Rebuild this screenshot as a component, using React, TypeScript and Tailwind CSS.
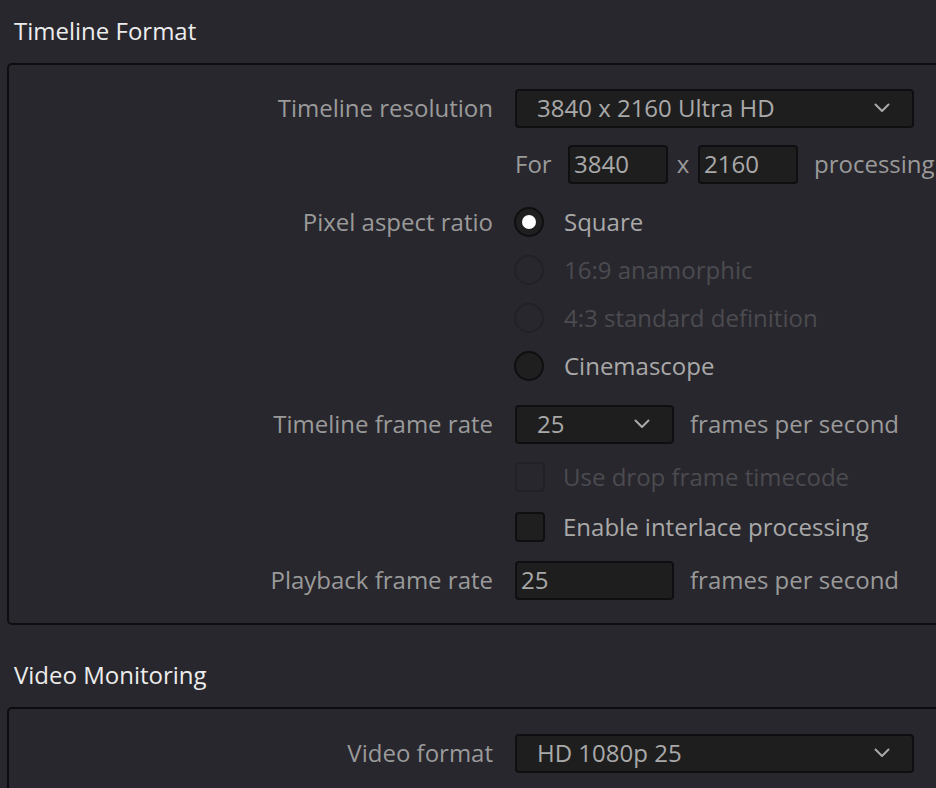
import React from 'react';

const font = { fontFamily: '"Open Sans", "Noto Sans", sans-serif' };

function Chevron() {
  return (
    <svg width="16" height="10" viewBox="0 0 16 10" fill="none">
      <path d="M1.5 1.5 L8 8 L14.5 1.5" stroke="#a9a9a9" strokeWidth="2" strokeLinecap="round" strokeLinejoin="round" />
    </svg>
  );
}

function Select({ value, width }: { value: string; width: string }) {
  return (
    <div className={`flex h-[39px] ${width} items-center justify-between rounded-[4px] border-2 border-[#0f0f11] bg-[#1e1e1f] pl-[20px] pr-[22px] text-[#a9a9a9]`}>
      <span>{value}</span>
      <Chevron />
    </div>
  );
}

function Field({ value, width }: { value: string; width: string }) {
  return (
    <div className={`flex h-[39px] ${width} items-center rounded-[4px] border-2 border-[#0f0f11] bg-[#1e1e1f] pl-[4px] text-[#a9a9a9]`}>
      {value}
    </div>
  );
}

function Radio({ label, checked, disabled }: { label: string; checked?: boolean; disabled?: boolean }) {
  return (
    <div className="flex h-[48px] items-center">
      <div
        className={`flex h-[30px] w-[30px] items-center justify-center rounded-full border-2 ${
          disabled ? 'border-[#222226] bg-transparent' : 'border-[#0f0f11] bg-[#1f1f20]'
        }`}
      >
        {checked && <div className="h-[14px] w-[14px] rounded-full bg-white" />}
      </div>
      <span className={`ml-[20px] ${disabled ? 'text-[#4b4b50]' : 'text-[#a9a9a9]'}`}>{label}</span>
    </div>
  );
}

function Checkbox({ label, disabled }: { label: string; disabled?: boolean }) {
  return (
    <div className="flex h-[50px] items-center">
      <div
        className={`h-[30px] w-[30px] rounded-[4px] border-2 ${
          disabled ? 'border-[#222226] bg-transparent' : 'border-[#0f0f11] bg-[#1f1f20]'
        }`}
      />
      <span className={`ml-[18px] ${disabled ? 'text-[#4b4b50]' : 'text-[#a9a9a9]'}`}>{label}</span>
    </div>
  );
}

function Row({ label, children, className = '' }: { label?: string; children: React.ReactNode; className?: string }) {
  return (
    <div className={`flex items-center ${className}`}>
      <div className="w-[484px] shrink-0 text-right text-[#9a9a9a]">{label}</div>
      <div className="ml-[22px] flex items-center">{children}</div>
    </div>
  );
}

function Heading({ children }: { children: React.ReactNode }) {
  return <div className="flex h-[63px] items-center pb-[2px] pl-[14px] text-[24px] text-[#ececec]">{children}</div>;
}

export default function App() {
  return (
    <div className="h-[788px] w-[936px] overflow-hidden bg-[#28272d] text-[24px]" style={font}>
      <Heading>Timeline Format</Heading>
      <div className="ml-[7px] w-[960px] rounded-[5px] border-2 border-[#0d0d0f] pb-[23px] pt-[23px]">
        <Row label="Timeline resolution" className="h-[40px]">
          <Select value="3840 x 2160 Ultra HD" width="w-[399px]" />
        </Row>
        <Row className="mt-[16px] h-[40px]">
          <span className="w-[53px] text-[#9a9a9a]">For</span>
          <Field value="3840" width="w-[100px]" />
          <span className="w-[30px] text-center text-[#9a9a9a]">x</span>
          <Field value="2160" width="w-[100px]" />
          <span className="ml-[16px] whitespace-nowrap text-[#9a9a9a]">processing</span>
        </Row>
        <div className="mt-[14px] flex">
          <div className="flex h-[48px] w-[484px] shrink-0 items-center justify-end text-[#9a9a9a]">Pixel aspect ratio</div>
          <div className="ml-[21px] flex flex-col">
            <Radio label="Square" checked />
            <Radio label="16:9 anamorphic" disabled />
            <Radio label="4:3 standard definition" disabled />
            <Radio label="Cinemascope" />
          </div>
        </div>
        <Row label="Timeline frame rate" className="mt-[14px] h-[40px]">
          <Select value="25" width="w-[159px]" />
          <span className="ml-[16px] whitespace-nowrap text-[#9a9a9a]">frames per second</span>
        </Row>
        <div className="mt-[8px] flex">
          <div className="w-[484px] shrink-0" />
          <div className="ml-[22px] flex flex-col">
            <Checkbox label="Use drop frame timecode" disabled />
            <Checkbox label="Enable interlace processing" />
          </div>
        </div>
        <Row label="Playback frame rate" className="mt-[8px] h-[40px]">
          <Field value="25" width="w-[159px]" />
          <span className="ml-[16px] whitespace-nowrap text-[#9a9a9a]">frames per second</span>
        </Row>
      </div>
      <div className="mt-[19px]">
        <Heading>Video Monitoring</Heading>
      </div>
      <div className="ml-[7px] w-[960px] rounded-[5px] border-2 border-[#0d0d0f] pb-[23px] pt-[24px]">
        <Row label="Video format" className="h-[40px]">
          <Select value="HD 1080p 25" width="w-[399px]" />
        </Row>
      </div>
    </div>
  );
}
